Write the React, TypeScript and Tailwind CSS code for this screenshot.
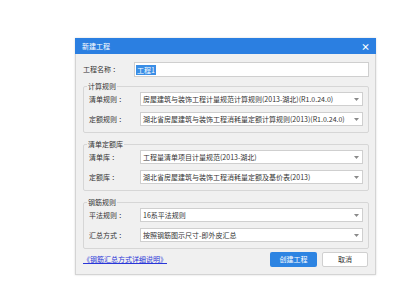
import React from "react";

const font = { fontFamily: '"Noto Sans CJK SC", "Noto Sans", sans-serif' };

function Arrow() {
  return (
    <svg width="5" height="3" viewBox="0 0 5 3" className="shrink-0">
      <path d="M0 0h5L2.5 3z" fill="#8a8a8a" />
    </svg>
  );
}

function SelectRow({ label, value }: { label: string; value: string }) {
  return (
    <div className="flex items-center h-[14px]">
      <div className="w-[51px] shrink-0 text-[7px] text-[#333] whitespace-nowrap">{label}</div>
      <div className="flex-1 h-full bg-white border border-[#cfcfcf] flex items-center justify-between pl-[2px] pr-[3px]">
        <span className="text-[7px] text-[#333] whitespace-nowrap">{value}</span>
        <Arrow />
      </div>
    </div>
  );
}

function Group({ title, children }: { title: string; children: React.ReactNode }) {
  return (
    <fieldset className="border border-[#d6d6d6] rounded-[2px] px-[5px] pb-[6px]">
      <legend className="-ml-[2px] px-[1px] text-[7px] leading-[10px] text-[#333]">{title}</legend>
      <div className="flex flex-col gap-[6px] pt-[1px]">{children}</div>
    </fieldset>
  );
}

export default function App() {
  return (
    <div className="min-h-screen bg-white pt-[38px] pl-[75px]" style={font}>
      <div className="w-[301px] h-[237px] flex flex-col shadow-[0_0_2px_rgba(0,0,0,0.15)]">
        {/* title bar */}
        <div className="h-[16px] bg-[#2b7fe1] flex items-center justify-between pl-[7px] pr-[6px] text-white">
          <span className="text-[7px]">新建工程</span>
          <span className="text-[9px] leading-none font-bold">×</span>
        </div>

        <div className="flex-1 bg-[#f0f0f0] border-x border-b border-[#d4d4d4] pl-[7px] pr-[6px] pt-[8px]">
          {/* name */}
          <div className="flex items-center h-[15px]">
            <div className="w-[51px] shrink-0 text-[7px] text-[#333] whitespace-nowrap">工程名称 ：</div>
            <div className="flex-1 h-full bg-white border border-[#cfcfcf] flex items-center pl-[1px]">
              <span className="bg-[#3a8ee6] text-white text-[7px] leading-[10px] px-[1px]">工程1</span>
            </div>
          </div>

          <div className="mt-[4px] flex flex-col gap-[6px]">
            <Group title="计算规则">
              <SelectRow label="清单规则 ：" value="房屋建筑与装饰工程计量规范计算规则(2013-湖北)(R1.0.24.0)" />
              <SelectRow label="定额规则 ：" value="湖北省房屋建筑与装饰工程消耗量定额计算规则(2013)(R1.0.24.0)" />
            </Group>
            <Group title="清单定额库">
              <SelectRow label="清单库 ：" value="工程量清单项目计量规范(2013-湖北)" />
              <SelectRow label="定额库 ：" value="湖北省房屋建筑与装饰工程消耗量定额及基价表(2013)" />
            </Group>
            <Group title="钢筋规则">
              <SelectRow label="平法规则 ：" value="16系平法规则" />
              <SelectRow label="汇总方式 ：" value="按照钢筋图示尺寸-即外皮汇总" />
            </Group>
          </div>

          {/* footer */}
          <div className="mt-[3px] flex items-center justify-between pr-[1px]">
            <a className="text-[7px] text-[#2a36d8] underline">《钢筋汇总方式详细说明》</a>
            <div className="flex gap-[5px]">
              <button className="w-[47px] h-[15px] bg-[#2d84e2] rounded-[2px] text-white text-[7px]">创建工程</button>
              <button className="w-[46px] h-[15px] bg-white border border-[#d0d0d0] rounded-[2px] text-[#333] text-[7px]">取消</button>
            </div>
          </div>
        </div>
      </div>
    </div>
  );
}
